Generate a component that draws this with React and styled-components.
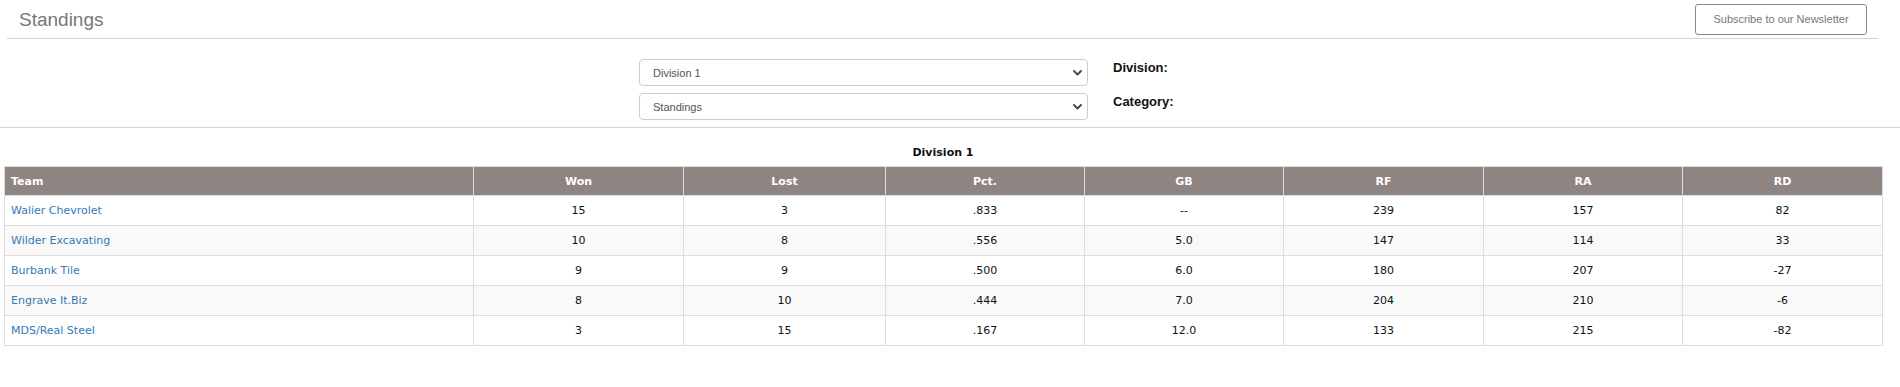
import React from 'react';
import styled, { createGlobalStyle } from 'styled-components';

const GlobalStyle = createGlobalStyle`
	html, body {
		margin: 0;
		padding: 0;
		background: #fff;
	}
	body {
		font-family: 'Liberation Sans', Arial, sans-serif;
	}
`;

const divisions = ['Division 1'];
const categories = ['Standings'];

const columns = [
	{ key: 'team', label: 'Team', width: 469, align: 'left' },
	{ key: 'won', label: 'Won', width: 210 },
	{ key: 'lost', label: 'Lost', width: 202 },
	{ key: 'pct', label: 'Pct.', width: 199 },
	{ key: 'gb', label: 'GB', width: 199 },
	{ key: 'rf', label: 'RF', width: 200 },
	{ key: 'ra', label: 'RA', width: 199 },
	{ key: 'rd', label: 'RD', width: 200 },
];

const standings = [
	{ team: 'Walier Chevrolet', won: 15, lost: 3, pct: '.833', gb: '--', rf: 239, ra: 157, rd: 82 },
	{ team: 'Wilder Excavating', won: 10, lost: 8, pct: '.556', gb: '5.0', rf: 147, ra: 114, rd: 33 },
	{ team: 'Burbank Tile', won: 9, lost: 9, pct: '.500', gb: '6.0', rf: 180, ra: 207, rd: -27 },
	{ team: 'Engrave It.Biz', won: 8, lost: 10, pct: '.444', gb: '7.0', rf: 204, ra: 210, rd: -6 },
	{ team: 'MDS/Real Steel', won: 3, lost: 15, pct: '.167', gb: '12.0', rf: 133, ra: 215, rd: -82 },
];

const Chevron = () => (
	<svg width="9" height="6" viewBox="0 0 9 6" fill="none">
		<path d="M1 1l3.5 3.5L8 1" stroke="#444" strokeWidth="1.8" strokeLinecap="round" strokeLinejoin="round" />
	</svg>
);

const App = () => {
	return (
		<>
			<GlobalStyle />
			<PageHeader>
				<Title>Standings</Title>
				<SubscribeButton type="button">Subscribe to our Newsletter</SubscribeButton>
			</PageHeader>

			<Filters>
				<SelectWrap>
					<Select defaultValue={divisions[0]}>
						{divisions.map(d => (
							<option key={d}>{d}</option>
						))}
					</Select>
					<SelectIcon>
						<Chevron />
					</SelectIcon>
				</SelectWrap>
				<FilterLabel>Division:</FilterLabel>
				<SelectWrap>
					<Select defaultValue={categories[0]}>
						{categories.map(c => (
							<option key={c}>{c}</option>
						))}
					</Select>
					<SelectIcon>
						<Chevron />
					</SelectIcon>
				</SelectWrap>
				<FilterLabel>Category:</FilterLabel>
			</Filters>

			<TableSection>
				<TableTitle>Division 1</TableTitle>
				<Table>
					<colgroup>
						{columns.map(c => (
							<col key={c.key} style={{ width: c.width }} />
						))}
					</colgroup>
					<thead>
						<tr>
							{columns.map(c => (
								<Th key={c.key} $align={c.align}>
									{c.label}
								</Th>
							))}
						</tr>
					</thead>
					<tbody>
						{standings.map((row, i) => (
							<Row key={row.team} $striped={i % 2 === 1}>
								{columns.map(c =>
									c.key === 'team' ? (
										<Td key={c.key} $align="left">
											<TeamLink href="#">{row.team}</TeamLink>
										</Td>
									) : (
										<Td key={c.key}>{row[c.key]}</Td>
									)
								)}
							</Row>
						))}
					</tbody>
				</Table>
			</TableSection>
		</>
	);
};
export default App;

const PageHeader = styled.header`
	display: flex;
	justify-content: space-between;
	align-items: center;
	margin: 0 22px 0 7px;
	padding: 3px 11px 3px 12px;
	border-bottom: 1px solid #d3d3d3;
	height: 32px;
`;

const Title = styled.h1`
	margin: 0;
	padding-top: 2px;
	font-size: 19px;
	font-weight: normal;
	color: #777;
`;

const SubscribeButton = styled.button`
	height: 31px;
	width: 172px;
	padding: 0;
	background: #fff;
	border: 1px solid #888;
	border-radius: 3px;
	font-family: 'Liberation Sans', Arial, sans-serif;
	font-size: 11px;
	color: #777;
	cursor: pointer;
`;

const Filters = styled.section`
	display: grid;
	grid-template-columns: 449px auto;
	grid-auto-rows: 27px;
	column-gap: 25px;
	row-gap: 7px;
	padding: 20px 0 7px 639px;
	border-bottom: 1px solid #d3d3d3;
`;

const SelectWrap = styled.div`
	position: relative;
`;

const Select = styled.select`
	appearance: none;
	width: 100%;
	height: 27px;
	padding: 0 28px 0 13px;
	background: #fff;
	border: 1px solid #ccc;
	border-radius: 4px;
	font-family: 'Liberation Sans', Arial, sans-serif;
	font-size: 11px;
	color: #555;
	outline: none;
`;

const SelectIcon = styled.span`
	position: absolute;
	right: 6px;
	top: 11px;
	display: flex;
	pointer-events: none;
`;

const FilterLabel = styled.label`
	padding-top: 1px;
	font-size: 13px;
	font-weight: bold;
	color: #111;
`;

const TableSection = styled.section`
	padding: 0 18px 0 4px;
	font-family: 'DejaVu Sans', Verdana, sans-serif;
	font-size: 11px;
`;

const TableTitle = styled.div`
	padding: 18px 0 7px;
	text-align: center;
	font-weight: bold;
	color: #111;
`;

const Table = styled.table`
	width: 1878px;
	table-layout: fixed;
	border-collapse: collapse;
	border: 1px solid #ddd;
`;

const Th = styled.th`
	height: 28px;
	padding: 0 6px;
	background: #8e8482;
	border: 1px solid #ddd;
	color: #fff;
	font-weight: bold;
	text-align: ${props => props.$align || 'center'};
`;

const Row = styled.tr`
	background: ${props => (props.$striped ? '#f9f9f9' : '#fff')};
`;

const Td = styled.td`
	height: 29px;
	padding: 0 6px;
	border: 1px solid #ddd;
	color: #111;
	text-align: ${props => props.$align || 'center'};
`;

const TeamLink = styled.a`
	color: #337ab7;
	text-decoration: none;
`;
